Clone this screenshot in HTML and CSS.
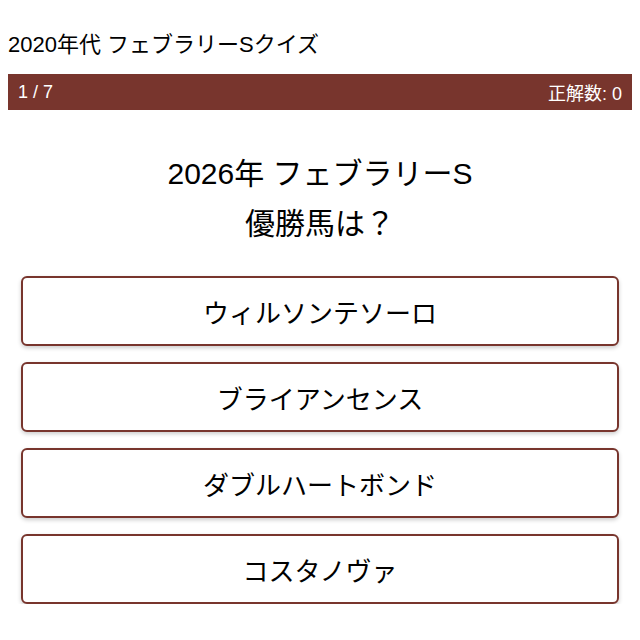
FILE: index.html
```html
<!DOCTYPE html>
<html lang="ja">
<head>
<meta charset="utf-8">
<link rel="stylesheet" href="styles.css">
</head>
<body>
<h1 class="title">2020年代 フェブラリーSクイズ</h1>
<div class="status">
  <span>1 / 7</span>
  <span>正解数: 0</span>
</div>
<div class="question">2026年 フェブラリーS<br>優勝馬は？</div>
<div class="choices">
  <button class="choice">ウィルソンテソーロ</button>
  <button class="choice">ブライアンセンス</button>
  <button class="choice">ダブルハートボンド</button>
  <button class="choice">コスタノヴァ</button>
</div>
</body>
</html>
```
FILE: styles.css
```css
body {
  margin: 8px;
  font-family: "Liberation Sans", Arial, "Noto Sans CJK JP", sans-serif;
  color: #000;
  background: #fff;
}
.title {
  font-size: 22px;
  font-weight: normal;
  margin: 24px 0 17px 0;
  line-height: 25px;
}
.status {
  display: flex;
  justify-content: space-between;
  align-items: center;
  background: #78352d;
  color: #fff;
  font-size: 18px;
  height: 36px;
  padding: 0 10px;
}
.question {
  text-align: center;
  font-size: 30px;
  line-height: 50px;
  margin: 39px 0 27px 0;
}
.choices {
  display: flex;
  flex-direction: column;
  gap: 16px;
  margin: 0 13px;
}
.choice {
  font-family: inherit;
  font-size: 26px;
  height: 70px;
  background: #fff;
  color: #000;
  border: 2px solid #78352d;
  border-radius: 6px;
  box-shadow: 0 2px 4px rgba(0, 0, 0, 0.2);
}
```
